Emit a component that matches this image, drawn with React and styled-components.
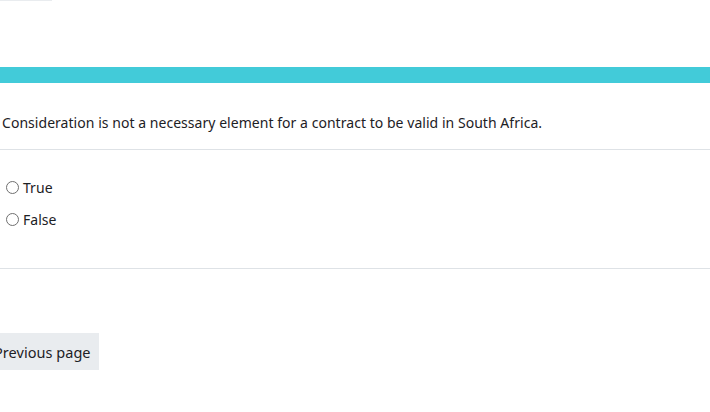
import React from 'react'
import styled, { createGlobalStyle } from 'styled-components'

const GlobalStyle = createGlobalStyle`
    html, body {
        margin: 0;
        padding: 0;
        background: #fff;
        overflow: hidden;
    }
    body {
        font-family: "Noto Sans", "Open Sans", sans-serif;
        font-size: 14px;
        letter-spacing: 0.04px;
        color: #1d2125;
    }
`

function App() {
    return (
        <Page>
            <GlobalStyle />
            <TopStub />
            <ProgressBar />
            <QuestionText>
                Consideration is not a necessary element for a contract to be valid in South Africa.
            </QuestionText>
            <Answers>
                <Option>
                    <Radio type='radio' name='q1' />
                    <span>True</span>
                </Option>
                <Option>
                    <Radio type='radio' name='q1' />
                    <span>False</span>
                </Option>
            </Answers>
            <Footer>
                <NavButton>Previous page</NavButton>
            </Footer>
        </Page>
    )
}

export default App

const Page = styled.div`
    width: 710px;
    height: 412px;
    overflow: hidden;
`

const TopStub = styled.div`
    width: 52px;
    height: 1px;
    background: #e9ecef;
`

const ProgressBar = styled.div`
    margin-top: 66px;
    height: 16px;
    background: #42cbd9;
`

const QuestionText = styled.div`
    padding: 29px 0 15px 2px;
    line-height: 22px;
    border-bottom: 1px solid #dee2e6;
`

const Answers = styled.div`
    padding: 26px 0 38px 6px;
    display: flex;
    flex-direction: column;
    gap: 10px;
    border-bottom: 1px solid #dee2e6;
`

const Option = styled.label`
    display: flex;
    align-items: center;
    gap: 4px;
    height: 22px;
    cursor: pointer;
`

const Radio = styled.input`
    appearance: none;
    margin: 0;
    width: 13px;
    height: 13px;
    border: 1px solid #6f6f6f;
    border-radius: 50%;
    background: #fff;
    box-sizing: border-box;
`

const Footer = styled.div`
    padding-top: 64px;
`

const NavButton = styled.button`
    margin-left: -18px;
    height: 37px;
    padding: 0 8px 0 12px;
    border: none;
    border-radius: 0;
    background: #e9ecef;
    color: #1d2125;
    font-family: inherit;
    font-size: 14.5px;
    letter-spacing: 0.04px;
    cursor: pointer;
`
